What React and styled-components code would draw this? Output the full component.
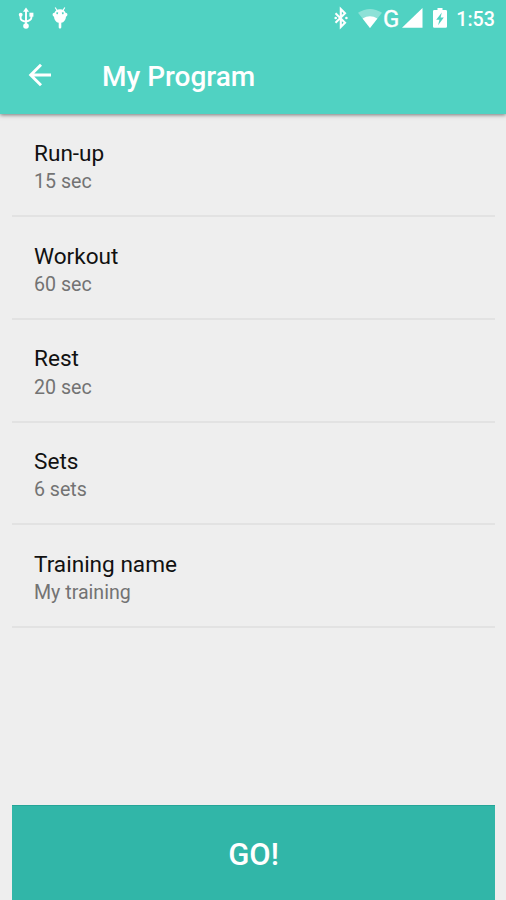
import React from "react";
import styled, { createGlobalStyle } from "styled-components";

const GlobalStyle = createGlobalStyle`
  * { box-sizing: border-box; }
  body { margin: 0; background: #eeeeee; font-family: Roboto, "Liberation Sans", sans-serif; }
`;

const Screen = styled.div`
  display: flex;
  flex-direction: column;
  width: 506px;
  height: 900px;
  overflow: hidden;
  background: #eeeeee;
`;

const Header = styled.header`
  flex: none;
  height: 114px;
  background: #50d2c2;
  color: #fff;
  box-shadow: 0 1px 4px rgba(0, 0, 0, 0.5);
`;

const StatusBar = styled.div`
  display: flex;
  align-items: center;
  height: 37px;
  padding: 0 11px 0 18px;
`;

const StatusIcon = styled.svg`
  display: block;
  flex: none;
  width: ${(p) => p.$w}px;
  height: 24px;
  margin-left: ${(p) => p.$gap || 0}px;
  margin-bottom: 1px;
  fill: #fff;
`;

const Spacer = styled.div`
  flex: 1;
`;

const Network = styled.span`
  width: 17px;
  margin-left: 1px;
  font-size: 24px;
  -webkit-text-stroke: 0.4px #fff;
  line-height: 36px;
`;

const Clock = styled.span`
  width: 39px;
  margin-left: 9px;
  padding-top: 2px;
  font-size: 19.7px;
  font-weight: 500;
  line-height: 38px;
  text-align: right;
  white-space: nowrap;
`;

const Toolbar = styled.div`
  display: flex;
  align-items: center;
  height: 77px;
  padding-left: 28px;
`;

const BackButton = styled.button`
  display: flex;
  padding: 0;
  margin-top: -1px;
  border: 0;
  background: none;
`;

const Title = styled.h1`
  margin: 3px 0 0 50px;
  font-size: 28px;
  font-weight: 500;
  line-height: 34px;
`;

const SettingsList = styled.main`
  flex: 1;
  padding: 0.6px 11px 0 12px;
`;

const Setting = styled.section`
  height: 102.7px;
  padding: 25.4px 22px 0;
  border-bottom: 2px solid #e2e2e2;
`;

const SettingName = styled.div`
  font-size: 22.6px;
  line-height: 28px;
  color: #111;
`;

const SettingValue = styled.div`
  margin-top: 0.3px;
  font-size: 19.6px;
  line-height: 28px;
  color: #737373;
`;

const Footer = styled.footer`
  flex: none;
  padding: 0 11px 0 12px;
`;

const GoButton = styled.button`
  display: block;
  width: 100%;
  height: 95px;
  padding: 4px 0 0;
  border: 0;
  border-top: 1px solid #24a597;
  background: #31b6a8;
  color: #fff;
  font: 500 31px/36px Roboto, "Liberation Sans", sans-serif;
`;

const settings = [
  ["Run-up", "15 sec"],
  ["Workout", "60 sec"],
  ["Rest", "20 sec"],
  ["Sets", "6 sets"],
  ["Training name", "My training"],
];

function UsbIcon() {
  return (
    <StatusIcon $w={16} viewBox="0 0 16 24">
      <path d="M8 1.500 5 5.800h6z" />
      <path d="M8 5v16M2.600 9v3.200q0 2.600 5.400 3.500M13.400 8v3.500q0 2.800-5.400 4.200" fill="none" stroke="#fff" strokeWidth="1.900" />
      <circle cx="2.700" cy="8.700" r="1.900" />
      <path d="M11.400 6.700h4v4h-4z" />
      <circle cx="8" cy="20" r="2.800" />
    </StatusIcon>
  );
}

function DebugIcon() {
  return (
    <StatusIcon $w={16} $gap={18} viewBox="0 0 16 24">
      <path d="m3.200 1.500 2 3.200M12.800 1.500l-2 3.200" stroke="#fff" strokeWidth="1.200" />
      <path
        fillRule="evenodd"
        d="M8 3.200c3 0 5 1.500 5.500 3.600 1.200 0 1.900.7 1.900 1.800 0 1-.5 1.800-1.400 2.100-.2 3.300-2.100 5.600-4.700 6.100v4.400c0 1.700-2.600 1.700-2.600 0v-4.400C4.100 16.300 2.200 14 2 10.700 1.100 10.400.6 9.600.6 8.600c0-1.100.7-1.800 1.900-1.800C3 4.700 5 3.200 8 3.200zM5.200 6.300a.9.9 0 1 0 .01 0zM10.800 6.300a.9.9 0 1 0 .01 0z"
      />
    </StatusIcon>
  );
}

function BluetoothIcon() {
  return (
    <StatusIcon $w={14} viewBox="0 0 14 24">
      <path d="m1.500 7.300 9.500 9.400-4.200 4.200V3.100L11 7.300l-9.500 9.400" fill="none" stroke="#fff" strokeWidth="2.100" />
      <circle cx="1.700" cy="12" r="1.300" />
      <circle cx="12.400" cy="12" r="1.300" />
    </StatusIcon>
  );
}

function WifiIcon() {
  return (
    <StatusIcon $w={24} $gap={10} viewBox="0 0 24 24">
      <path d="M0 6.800Q12-.8 24 6.800L12 22z" opacity=".35" />
      <path d="M4.600 12.500Q12 7.800 19.400 12.500L12 22z" />
    </StatusIcon>
  );
}

function SignalIcon() {
  return (
    <StatusIcon $w={21} $gap={2} viewBox="0 0 21 24">
      <path d="M0 21.700 20.500 2v19.700z" />
    </StatusIcon>
  );
}

function BatteryIcon() {
  return (
    <StatusIcon $w={14} $gap={10} viewBox="0 0 14 24">
      <path
        fillRule="evenodd"
        d="M4.500 1.900h5v2h3.200q1.300 0 1.300 1.300v15.200q0 1.300-1.300 1.300H1.300Q0 21.700 0 20.400V5.200q0-1.300 1.300-1.300h3.200zM8.800 6.500 3.200 13.800h3.200l-1.300 5.400 5.700-7.800H7.600z"
      />
    </StatusIcon>
  );
}

export default function App() {
  return (
    <>
      <GlobalStyle />
      <Screen>
        <Header>
          <StatusBar>
            <UsbIcon />
            <DebugIcon />
            <Spacer />
            <BluetoothIcon />
            <WifiIcon />
            <Network>G</Network>
            <SignalIcon />
            <BatteryIcon />
            <Clock>1:53</Clock>
          </StatusBar>
          <Toolbar>
            <BackButton aria-label="Back">
              <svg width="24" height="24" viewBox="0 0 24 24" fill="none" stroke="#fff" strokeWidth="2.900">
                <path d="M23 12H3M13 1.800 2.700 12 13 22.200" />
              </svg>
            </BackButton>
            <Title>My Program</Title>
          </Toolbar>
        </Header>
        <SettingsList>
          {settings.map(([name, value]) => (
            <Setting key={name}>
              <SettingName>{name}</SettingName>
              <SettingValue>{value}</SettingValue>
            </Setting>
          ))}
        </SettingsList>
        <Footer>
          <GoButton>GO!</GoButton>
        </Footer>
      </Screen>
    </>
  );
}
